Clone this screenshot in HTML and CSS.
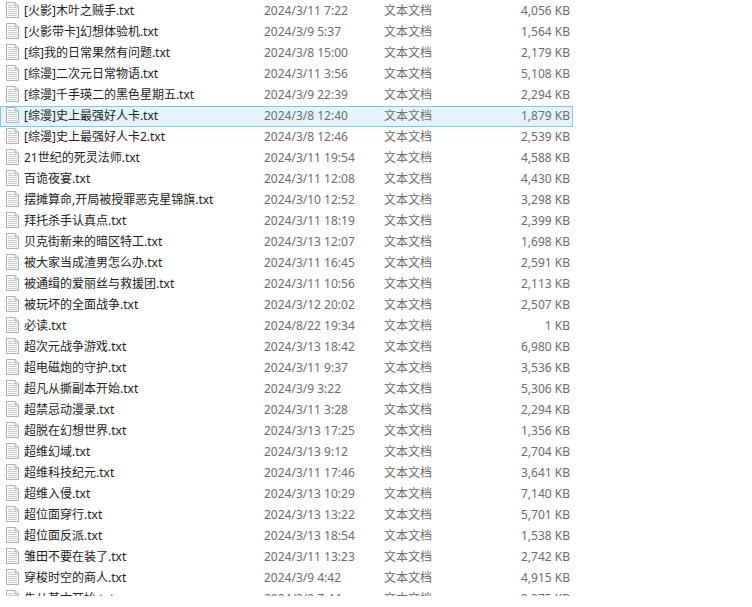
FILE: index.html
```html
<!DOCTYPE html>
<html lang="zh-CN">
<head>
    <meta charset="UTF-8">
    <title>文件列表</title>
    <link rel="stylesheet" href="styles.css">
</head>
<body>
    <svg class="sprite" width="0" height="0">
        <symbol id="txt" viewBox="0 0 13 16">
            <path d="M.5 .5H9L12.5 4V15.5H.5Z" fill="#fbfbfb" stroke="#a9b0b6"/>
            <path d="M9 .5V4H12.5" fill="#e4e7ea" stroke="#a9b0b6"/>
            <path d="M2 3.5H7.5M2 5.5H11M2 7.5H11M2 9.5H11M2 11.5H11M2 13.5H11" stroke="#c6ced5"/>
        </symbol>
    </svg>

    <div class="file-list">
        <div class="row"><span class="name"><svg class="icon"><use href="#txt"/></svg>[火影]木叶之贼手.txt</span><span class="date">2024/3/11 7:22</span><span class="type">文本文档</span><span class="size">4,056 KB</span></div>
        <div class="row"><span class="name"><svg class="icon"><use href="#txt"/></svg>[火影带卡]幻想体验机.txt</span><span class="date">2024/3/9 5:37</span><span class="type">文本文档</span><span class="size">1,564 KB</span></div>
        <div class="row"><span class="name"><svg class="icon"><use href="#txt"/></svg>[综]我的日常果然有问题.txt</span><span class="date">2024/3/8 15:00</span><span class="type">文本文档</span><span class="size">2,179 KB</span></div>
        <div class="row"><span class="name"><svg class="icon"><use href="#txt"/></svg>[综漫]二次元日常物语.txt</span><span class="date">2024/3/11 3:56</span><span class="type">文本文档</span><span class="size">5,108 KB</span></div>
        <div class="row"><span class="name"><svg class="icon"><use href="#txt"/></svg>[综漫]千手瑛二的黑色星期五.txt</span><span class="date">2024/3/9 22:39</span><span class="type">文本文档</span><span class="size">2,294 KB</span></div>
        <div class="row selected"><span class="name"><svg class="icon"><use href="#txt"/></svg>[综漫]史上最强好人卡.txt</span><span class="date">2024/3/8 12:40</span><span class="type">文本文档</span><span class="size">1,879 KB</span></div>
        <div class="row"><span class="name"><svg class="icon"><use href="#txt"/></svg>[综漫]史上最强好人卡2.txt</span><span class="date">2024/3/8 12:46</span><span class="type">文本文档</span><span class="size">2,539 KB</span></div>
        <div class="row"><span class="name"><svg class="icon"><use href="#txt"/></svg>21世纪的死灵法师.txt</span><span class="date">2024/3/11 19:54</span><span class="type">文本文档</span><span class="size">4,588 KB</span></div>
        <div class="row"><span class="name"><svg class="icon"><use href="#txt"/></svg>百诡夜宴.txt</span><span class="date">2024/3/11 12:08</span><span class="type">文本文档</span><span class="size">4,430 KB</span></div>
        <div class="row"><span class="name"><svg class="icon"><use href="#txt"/></svg>摆摊算命,开局被授罪恶克星锦旗.txt</span><span class="date">2024/3/10 12:52</span><span class="type">文本文档</span><span class="size">3,298 KB</span></div>
        <div class="row"><span class="name"><svg class="icon"><use href="#txt"/></svg>拜托杀手认真点.txt</span><span class="date">2024/3/11 18:19</span><span class="type">文本文档</span><span class="size">2,399 KB</span></div>
        <div class="row"><span class="name"><svg class="icon"><use href="#txt"/></svg>贝克街新来的暗区特工.txt</span><span class="date">2024/3/13 12:07</span><span class="type">文本文档</span><span class="size">1,698 KB</span></div>
        <div class="row"><span class="name"><svg class="icon"><use href="#txt"/></svg>被大家当成渣男怎么办.txt</span><span class="date">2024/3/11 16:45</span><span class="type">文本文档</span><span class="size">2,591 KB</span></div>
        <div class="row"><span class="name"><svg class="icon"><use href="#txt"/></svg>被通缉的爱丽丝与救援团.txt</span><span class="date">2024/3/11 10:56</span><span class="type">文本文档</span><span class="size">2,113 KB</span></div>
        <div class="row"><span class="name"><svg class="icon"><use href="#txt"/></svg>被玩坏的全面战争.txt</span><span class="date">2024/3/12 20:02</span><span class="type">文本文档</span><span class="size">2,507 KB</span></div>
        <div class="row"><span class="name"><svg class="icon"><use href="#txt"/></svg>必读.txt</span><span class="date">2024/8/22 19:34</span><span class="type">文本文档</span><span class="size">1 KB</span></div>
        <div class="row"><span class="name"><svg class="icon"><use href="#txt"/></svg>超次元战争游戏.txt</span><span class="date">2024/3/13 18:42</span><span class="type">文本文档</span><span class="size">6,980 KB</span></div>
        <div class="row"><span class="name"><svg class="icon"><use href="#txt"/></svg>超电磁炮的守护.txt</span><span class="date">2024/3/11 9:37</span><span class="type">文本文档</span><span class="size">3,536 KB</span></div>
        <div class="row"><span class="name"><svg class="icon"><use href="#txt"/></svg>超凡从撕副本开始.txt</span><span class="date">2024/3/9 3:22</span><span class="type">文本文档</span><span class="size">5,306 KB</span></div>
        <div class="row"><span class="name"><svg class="icon"><use href="#txt"/></svg>超禁忌动漫录.txt</span><span class="date">2024/3/11 3:28</span><span class="type">文本文档</span><span class="size">2,294 KB</span></div>
        <div class="row"><span class="name"><svg class="icon"><use href="#txt"/></svg>超脱在幻想世界.txt</span><span class="date">2024/3/13 17:25</span><span class="type">文本文档</span><span class="size">1,356 KB</span></div>
        <div class="row"><span class="name"><svg class="icon"><use href="#txt"/></svg>超维幻域.txt</span><span class="date">2024/3/13 9:12</span><span class="type">文本文档</span><span class="size">2,704 KB</span></div>
        <div class="row"><span class="name"><svg class="icon"><use href="#txt"/></svg>超维科技纪元.txt</span><span class="date">2024/3/11 17:46</span><span class="type">文本文档</span><span class="size">3,641 KB</span></div>
        <div class="row"><span class="name"><svg class="icon"><use href="#txt"/></svg>超维入侵.txt</span><span class="date">2024/3/13 10:29</span><span class="type">文本文档</span><span class="size">7,140 KB</span></div>
        <div class="row"><span class="name"><svg class="icon"><use href="#txt"/></svg>超位面穿行.txt</span><span class="date">2024/3/13 13:22</span><span class="type">文本文档</span><span class="size">5,701 KB</span></div>
        <div class="row"><span class="name"><svg class="icon"><use href="#txt"/></svg>超位面反派.txt</span><span class="date">2024/3/13 18:54</span><span class="type">文本文档</span><span class="size">1,538 KB</span></div>
        <div class="row"><span class="name"><svg class="icon"><use href="#txt"/></svg>雏田不要在装了.txt</span><span class="date">2024/3/11 13:23</span><span class="type">文本文档</span><span class="size">2,742 KB</span></div>
        <div class="row"><span class="name"><svg class="icon"><use href="#txt"/></svg>穿梭时空的商人.txt</span><span class="date">2024/3/9 4:42</span><span class="type">文本文档</span><span class="size">4,915 KB</span></div>
        <div class="row"><span class="name"><svg class="icon"><use href="#txt"/></svg>先从基本开始.txt</span><span class="date">2024/3/9 7:44</span><span class="type">文本文档</span><span class="size">3,375 KB</span></div>
    </div>
</body>
</html>
```

FILE: styles.css
```css
* {
    margin: 0;
    padding: 0;
    box-sizing: border-box;
}

body {
    background: #fff;
    font-family: "Noto Sans", "Noto Sans CJK SC", sans-serif;
    font-size: 12px;
    line-height: 18px;
    overflow: hidden;
}

.sprite {
    display: block;
}

/* cut off by the window, the last row only shows its top part */
.file-list {
    width: 573px;
    height: 596px;
    padding-top: 1px;
    overflow: hidden;
}

.row {
    display: grid;
    grid-template-columns: 263px 120px 100px 1fr;
    align-items: start;
    height: 21px;
    border: 1px solid transparent;
    color: #6d6d6d;
}

.row.selected {
    background: #e5f3fb;
    border-color: #86c5e2;
}

.name {
    display: flex;
    align-items: center;
    gap: 5px;
    padding-left: 5px;
    color: #222;
    white-space: nowrap;
}

.icon {
    width: 13px;
    height: 16px;
    margin-bottom: 2px;
    flex: none;
}

.size {
    text-align: right;
    padding-right: 2px;
}
```
